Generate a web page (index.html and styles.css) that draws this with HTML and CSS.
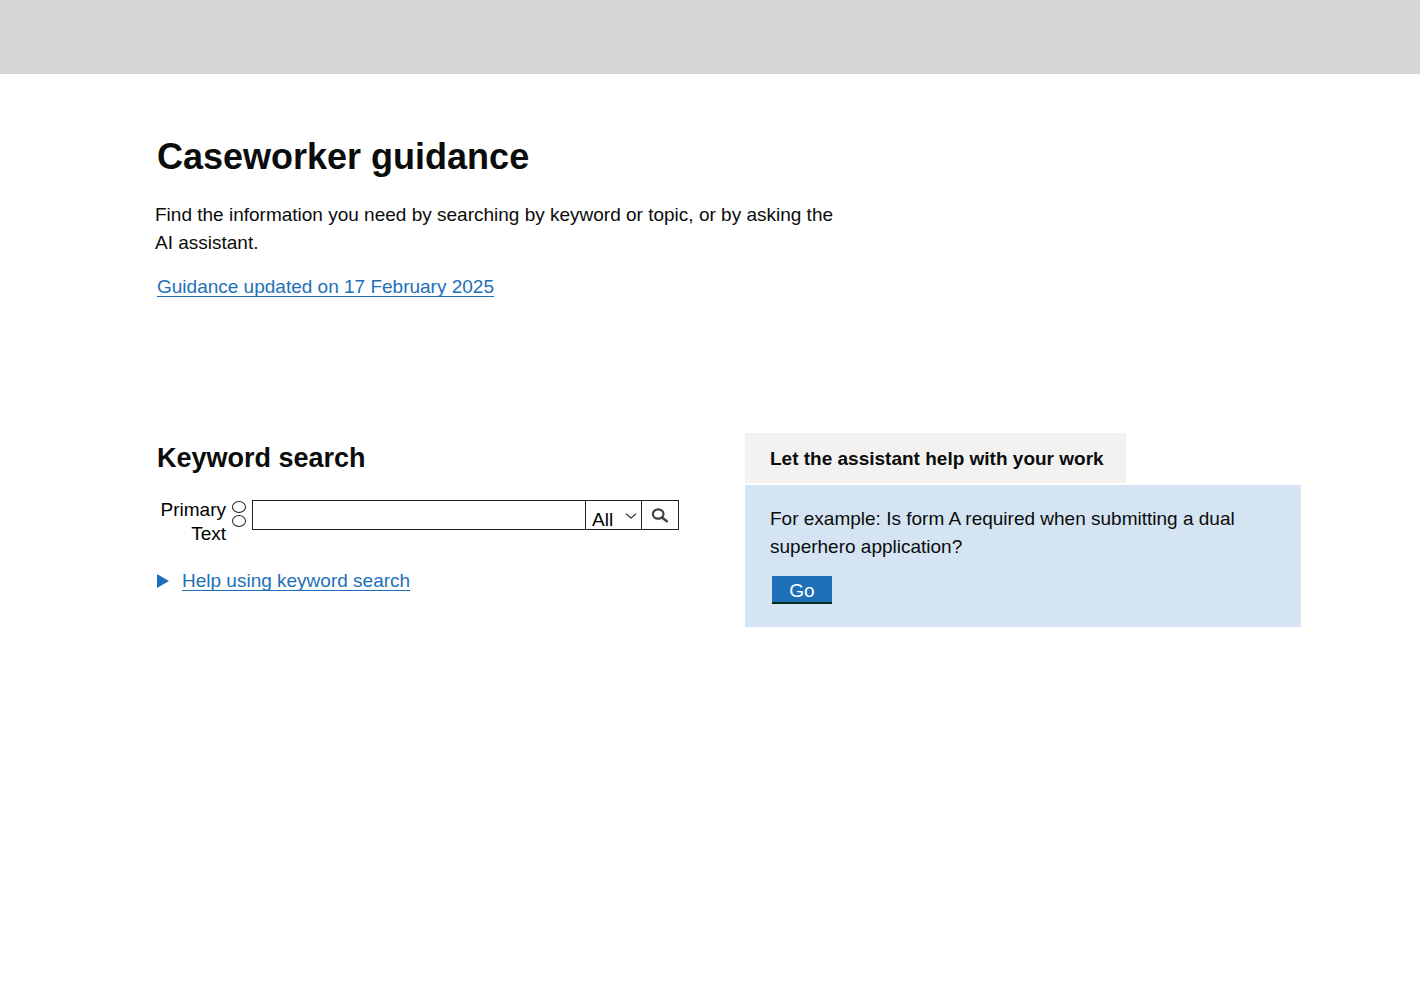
FILE: index.html
```html
<!DOCTYPE html>
<html lang="en">
<head>
<meta charset="utf-8">
<meta name="viewport" content="width=device-width, initial-scale=1">
<title>Caseworker guidance</title>
<link rel="stylesheet" href="styles.css">
</head>
<body>
<header class="banner"></header>
<main class="page">
  <section class="intro">
    <h1 class="title">Caseworker guidance</h1>
    <p class="lead">Find the information you need by searching by keyword or topic, or by asking the AI assistant.</p>
    <a class="link updated" href="#">Guidance updated on 17 February 2025</a>
  </section>
  <div class="columns">
    <section class="keyword">
      <h2 class="subtitle">Keyword search</h2>
      <form class="search">
        <label class="search-label" for="query">Primary Text</label>
        <div class="choices">
          <input class="choice" type="radio" name="field" aria-label="Primary">
          <input class="choice" type="radio" name="field" aria-label="Text">
        </div>
        <div class="search-box">
          <input class="query" id="query" type="text">
          <div class="scope">
            <select class="scope-select" aria-label="Topic"><option>All</option></select>
            <svg class="chevron" viewBox="0 0 12 6" aria-hidden="true"><path d="M0.8 0.6 L6 5 L11.2 0.6" fill="none" stroke="#222" stroke-width="1.1"/></svg>
          </div>
          <button class="search-button" type="button" aria-label="Search">
            <svg class="glass" viewBox="0 0 18 16" aria-hidden="true"><ellipse cx="7.2" cy="7" rx="5.3" ry="4.7" fill="none" stroke="#3d4347" stroke-width="2.2"/><path d="M11 10.4 L15.8 14.2" stroke="#3d4347" stroke-width="2.5" stroke-linecap="round"/></svg>
          </button>
        </div>
      </form>
      <details class="help">
        <summary class="help-summary"><svg class="arrow" viewBox="0 0 12 14" aria-hidden="true"><path d="M0 0 L12 7 L0 14 Z" fill="#1d70b8"/></svg><span class="link">Help using keyword search</span></summary>
      </details>
    </section>
    <section class="assistant">
      <h2 class="assistant-title">Let the assistant help with your work</h2>
      <div class="assistant-panel">
        <p class="example">For example: Is form A required when submitting a dual superhero application?</p>
        <button class="go" type="button">Go</button>
      </div>
    </section>
  </div>
</main>
</body>
</html>
```
FILE: styles.css
```css
* {
  box-sizing: border-box;
}

body {
  margin: 0;
  background: #fff;
  color: #0b0c0c;
  font-family: "Liberation Sans", Arial, sans-serif;
  font-size: 19px;
  line-height: 28px;
}

h1, h2, p {
  margin: 0;
}

.banner {
  height: 74px;
  background: #d6d6d6;
}

.page {
  padding: 60px 119px 60px 155px;
}

.title {
  padding-left: 2px;
  font-size: 36px;
  line-height: 46px;
}

.lead {
  max-width: 690px;
  margin-top: 21px;
}

.link {
  color: #1d70b8;
  text-decoration: underline;
  text-decoration-thickness: 1px;
  text-decoration-skip-ink: none;
  text-underline-offset: 3px;
}

.updated {
  display: inline-block;
  margin: 16px 0 0 2px;
}

.columns {
  display: grid;
  grid-template-columns: minmax(0, 522fr) minmax(0, 556fr);
  column-gap: 66px;
  align-items: start;
  margin-top: 132px;
  padding-left: 2px;
}

.subtitle {
  margin-top: 8px;
  font-size: 27px;
  line-height: 34px;
}

.search {
  display: flex;
  align-items: flex-start;
  gap: 6px;
  margin-top: 23px;
}

.search-label {
  width: 69px;
  color: #000;
  line-height: 24px;
  text-align: right;
}

.choices {
  display: flex;
  flex-direction: column;
  gap: 2px;
  padding-top: 3px;
}

.choice {
  width: 14px;
  height: 12px;
  margin: 0;
  appearance: none;
  border: 1px solid #222;
  border-radius: 50%;
}

.choice:checked {
  background: #222;
}

.search-box {
  display: flex;
  flex: 1;
  height: 30px;
  margin-top: 2px;
  border: 1px solid #222;
}

.query {
  flex: 1;
  min-width: 0;
  padding: 0 6px;
  border: 0;
  font: inherit;
}

.scope {
  position: relative;
  width: 57px;
  border: solid #222;
  border-width: 0 1px;
}

.scope-select {
  width: 100%;
  height: 28px;
  padding: 10px 0 0 6px;
  appearance: none;
  border: 0;
  background: transparent;
  color: #000;
  font: inherit;
  line-height: 18px;
}

.chevron {
  position: absolute;
  top: 12px;
  right: 4px;
  width: 12px;
  height: 6px;
  pointer-events: none;
}

.search-button {
  display: flex;
  align-items: center;
  justify-content: center;
  width: 36px;
  padding: 0;
  border: 0;
  background: transparent;
}

.glass {
  width: 18px;
  height: 16px;
}

.help {
  margin-top: 21px;
}

.help-summary {
  display: flex;
  align-items: center;
  gap: 13px;
  list-style: none;
  cursor: pointer;
}

.arrow {
  width: 12px;
  height: 14px;
}

.assistant-title {
  width: fit-content;
  padding: 12px 22px 10px 25px;
  background: #f3f2f1;
  font-size: 19px;
  line-height: 28px;
}

.assistant-panel {
  margin-top: 2px;
  padding: 20px 25px 23px;
  background: #d4e4f3;
}

.example {
  max-width: 490px;
}

.go {
  display: block;
  width: 60px;
  height: 28px;
  margin: 15px 0 0 2px;
  padding: 3px 0 0;
  border: 0;
  border-bottom: 2px solid #002d18;
  background: #1d70b8;
  color: #fff;
  font: inherit;
  line-height: 22px;
}
```
